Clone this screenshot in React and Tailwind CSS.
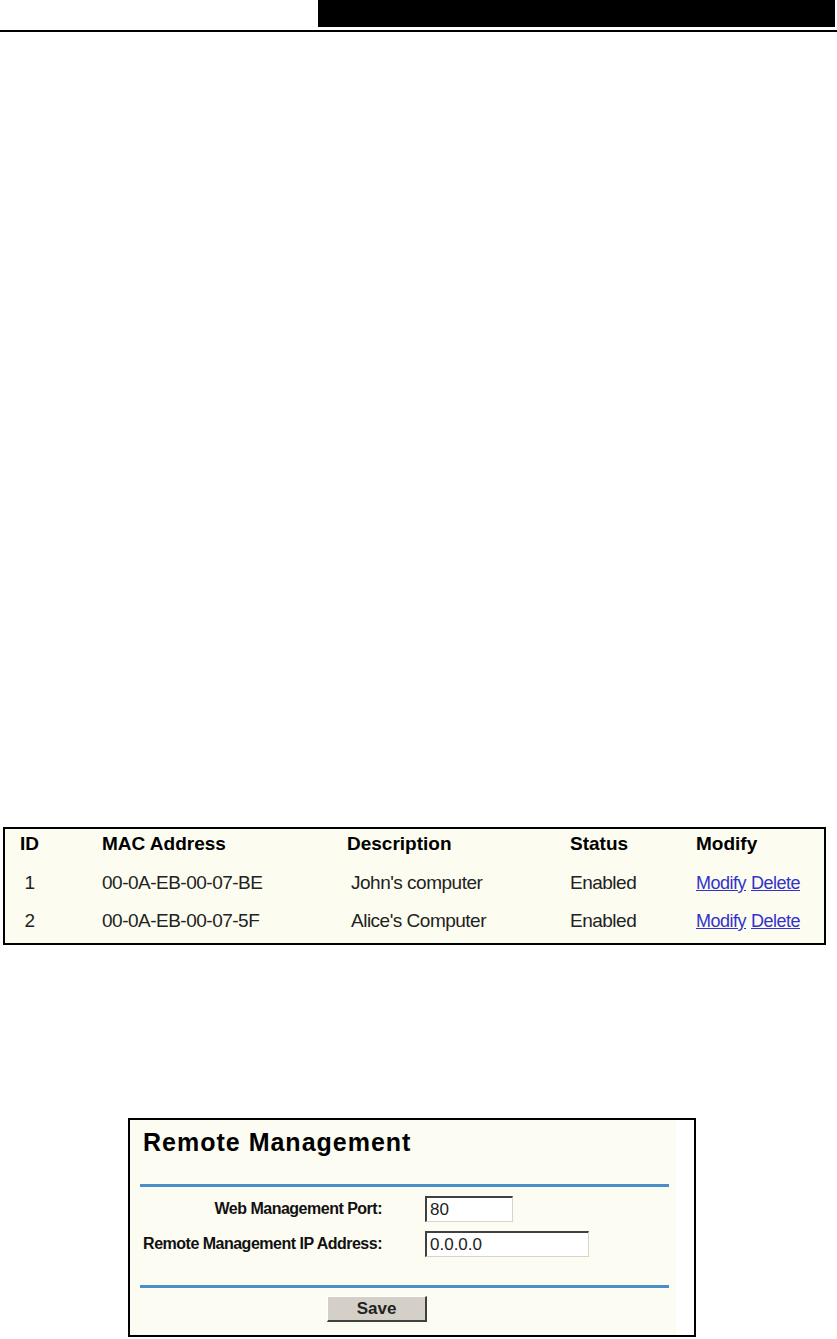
import React from 'react';

const font = { fontFamily: '"Liberation Sans", Arial, sans-serif' };

const rows = [
  { id: 1, mac: '00-0A-EB-00-07-BE', desc: "John's computer", status: 'Enabled' },
  { id: 2, mac: '00-0A-EB-00-07-5F', desc: "Alice's Computer", status: 'Enabled' },
];

function Row({ children, className = '' }) {
  return <div className={`flex items-center leading-[22px] ${className}`}>{children}</div>;
}

function FilterTable() {
  return (
    <div className="ml-[3px] w-[823px] border-2 border-black bg-[#fcfdf0] pl-[15px] pt-[4px] pb-[11px] text-[#222]">
      <Row className="font-bold text-[19px] text-black">
        <div className="w-[82px]"><div className="w-[19px] text-center">ID</div></div>
        <div className="w-[245px]">MAC Address</div>
        <div className="w-[223px]">Description</div>
        <div className="w-[126px]">Status</div>
        <div>Modify</div>
      </Row>
      {rows.map((r, i) => (
        <Row key={r.id} className={`text-[19px] tracking-[-0.5px] ${i === 0 ? 'mt-[17px]' : 'mt-[16px]'}`}>
          <div className="w-[82px]"><div className="w-[19px] text-center">{r.id}</div></div>
          <div className="w-[245px]">{r.mac}</div>
          <div className="w-[223px] pl-[4px]">{r.desc}</div>
          <div className="w-[126px]">{r.status}</div>
          <div className="flex gap-[5px] text-[18px] text-[#3333cc]">
            <a className="underline">Modify</a>
            <a className="underline">Delete</a>
          </div>
        </Row>
      ))}
    </div>
  );
}

function Field({ label, value, width, className = '' }) {
  return (
    <div className={`flex items-center ${className}`}>
      <div className="w-[252px] text-right text-[16px] tracking-[-0.5px] font-bold text-[#111]">{label}</div>
      <div
        className={`ml-[43px] h-[26px] ${width} flex items-center bg-white border-t-2 border-l-2 border-b border-r border-t-[#404040] border-l-[#404040] border-b-[#d8d4cc] border-r-[#d8d4cc] pl-[3px] text-[17px] text-[#222]`}
      >
        {value}
      </div>
    </div>
  );
}

function RemoteManagement() {
  return (
    <div className="ml-[128px] w-[568px] border-2 border-black bg-white">
      <div className="mr-[18px] bg-[#fcfcf2] pb-[13px]">
        <div className="pl-[13px] pt-[7px] text-[25px] leading-[30px] font-bold tracking-[1px] text-black">
          Remote Management
        </div>
        <div className="ml-[10px] w-[529px] h-[3px] mt-[27px] bg-[#4a90c8]" />
        <Field label="Web Management Port:" value="80" width="w-[88px]" className="mt-[9px]" />
        <Field label="Remote Management IP Address:" value="0.0.0.0" width="w-[164px]" className="mt-[9px]" />
        <div className="ml-[10px] w-[529px] h-[3px] mt-[28px] bg-[#4a90c8]" />
        <div className="mt-[8px] ml-[197px] w-[100px] h-[26px] flex items-center justify-center bg-[#d4d0c8] border-t border-l border-t-white border-l-white border-b-2 border-r-2 border-b-[#404040] border-r-[#404040] text-[17px] font-bold text-[#222]">
          Save
        </div>
      </div>
    </div>
  );
}

export default function App() {
  return (
    <div className="min-h-[1339px] w-[837px] bg-white" style={font}>
      <div className="ml-[318px] w-[517px] h-[27px] bg-black" />
      <div className="mt-[3px] h-[2px] bg-black" />
      <div className="mt-[795px]">
        <FilterTable />
      </div>
      <div className="mt-[173px]">
        <RemoteManagement />
      </div>
    </div>
  );
}
